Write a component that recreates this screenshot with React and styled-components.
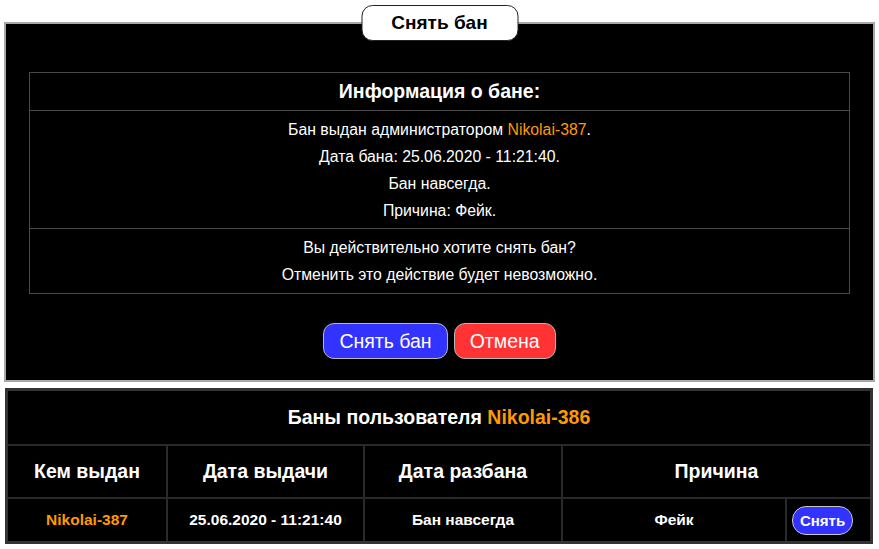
import React from "react";
import styled, { createGlobalStyle } from "styled-components";

const GlobalStyle = createGlobalStyle`
  html, body {
    margin: 0;
    padding: 0;
    background: #ffffff;
    font-family: "Liberation Sans", Arial, sans-serif;
  }
`;

const Page = styled.div`
  width: 879px;
  padding: 5px 4px 0 4px;
  box-sizing: border-box;
  display: flex;
  flex-direction: column;
  gap: 6px;
`;

const Panel = styled.div`
  position: relative;
  margin-top: 17px;
  background: #000;
  border: 2px solid #a8a8a8;
  padding: 48px 24px 21px 24px;
  display: flex;
  flex-direction: column;
  align-items: center;
`;

const Tab = styled.div`
  position: absolute;
  top: -19px;
  left: 50%;
  transform: translateX(-50%);
  width: 157px;
  height: 36px;
  box-sizing: border-box;
  background: #fff;
  border: 1px solid #222;
  border-radius: 11px;
  display: flex;
  align-items: center;
  justify-content: center;
  font-weight: bold;
  font-size: 19px;
  color: #000;
`;

const InfoTable = styled.div`
  width: 100%;
  border: 1px solid #4a4a4a;
  display: flex;
  flex-direction: column;
`;

const InfoRow = styled.div`
  border-top: ${(p) => (p.$first ? "none" : "1px solid #4a4a4a")};
  padding: ${(p) => p.$pad || "0"};
  color: #fff;
  text-align: center;
  font-size: ${(p) => (p.$head ? "19.5px" : "15.8px")};
  font-weight: ${(p) => (p.$head ? "bold" : "normal")};
  line-height: ${(p) => (p.$head ? "37px" : "27px")};
`;

const Line = styled.div``;

const Name = styled.span`
  color: #ff9900;
  font-weight: ${(p) => (p.$bold ? "bold" : "normal")};
`;

const Buttons = styled.div`
  margin-top: 29px;
  display: flex;
  gap: 6px;
`;

const Button = styled.button`
  height: 36px;
  padding: 0 15px;
  border: 1px solid #b8b8b8;
  border-radius: 11px;
  background: ${(p) => p.$bg};
  color: #fff;
  font-family: "Liberation Sans", Arial, sans-serif;
  font-size: 19.5px;
  cursor: pointer;
`;

const BansTable = styled.table`
  width: 868px;
  margin-left: 1px;
  border-collapse: collapse;
  background: #000;
  border: 3px solid #333;
  color: #fff;
`;

const Cell = styled.td`
  border: 2px solid #2a2a2a;
  text-align: ${(p) => p.$align || "center"};
  padding: ${(p) => (p.$align === "left" ? "0 0 0 5px" : "0")};
  height: ${(p) => p.$h}px;
  font-size: ${(p) => p.$fs || 15.5}px;
  font-weight: bold;
`;

const SmallButton = styled.button`
  height: 29px;
  width: 61px;
  border: 1px solid #c8c8c8;
  border-radius: 14px;
  background: #3333ff;
  color: #fff;
  font-family: "Liberation Sans", Arial, sans-serif;
  font-weight: bold;
  font-size: 15px;
  cursor: pointer;
`;

export default function App() {
  return (
    <>
      <GlobalStyle />
      <Page>
        <Panel>
          <Tab>Снять бан</Tab>
          <InfoTable>
            <InfoRow $first $head>Информация о бане:</InfoRow>
            <InfoRow $pad="5px 0 4px">
              <Line>
                Бан выдан администратором <Name>Nikolai-387</Name>.
              </Line>
              <Line>Дата бана: 25.06.2020 - 11:21:40.</Line>
              <Line>Бан навсегда.</Line>
              <Line>Причина: Фейк.</Line>
            </InfoRow>
            <InfoRow $pad="5px 0 5px">
              <Line>Вы действительно хотите снять бан?</Line>
              <Line>Отменить это действие будет невозможно.</Line>
            </InfoRow>
          </InfoTable>
          <Buttons>
            <Button $bg="#3333ff">Снять бан</Button>
            <Button $bg="#ff3333">Отмена</Button>
          </Buttons>
        </Panel>

        <BansTable>
          <tbody>
            <tr>
              <Cell colSpan={5} $h={53} $fs={19.5}>
                Баны пользователя <Name $bold>Nikolai-386</Name>
              </Cell>
            </tr>
            <tr>
              <Cell $h={51} $fs={19.5} style={{ width: 158 }}>Кем выдан</Cell>
              <Cell $fs={19.5} style={{ width: 195 }}>Дата выдачи</Cell>
              <Cell $fs={19.5} style={{ width: 196 }}>Дата разбана</Cell>
              <Cell $fs={19.5} colSpan={2}>Причина</Cell>
            </tr>
            <tr>
              <Cell $h={42}><Name $bold>Nikolai-387</Name></Cell>
              <Cell>25.06.2020 - 11:21:40</Cell>
              <Cell>Бан навсегда</Cell>
              <Cell style={{ width: 222 }}>Фейк</Cell>
              <Cell $align="left">
                <SmallButton>Снять</SmallButton>
              </Cell>
            </tr>
          </tbody>
        </BansTable>
      </Page>
    </>
  );
}
